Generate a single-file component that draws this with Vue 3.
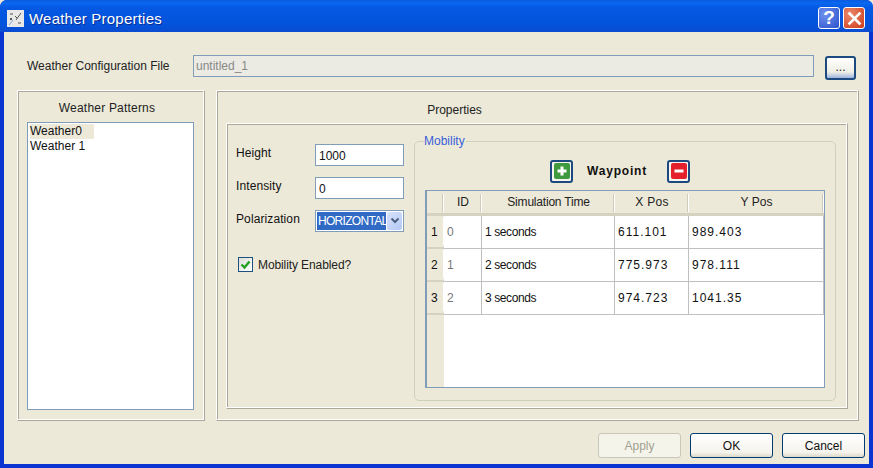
<template>
  <div class="window">
    <div class="titlebar">
      <span class="app-icon">
        <svg width="17" height="17" viewBox="0 0 17 17">
          <rect width="17" height="17" fill="#e8e8e8" />
          <path d="M3 8l2 2M5 8l-2 2M9 10l5-7M3 4h3M11 13h3M8 6l2 2" stroke="#555" stroke-width="1" fill="none" />
          <path d="M2 15l4-5" stroke="#7aa5d8" stroke-width="1" />
        </svg>
      </span>
      <span class="title">Weather Properties</span>
      <button class="cap-btn help">?</button>
      <button class="cap-btn close">
        <svg width="15" height="15" viewBox="0 0 15 15">
          <path d="M2.5 2.5l10 10M12.5 2.5l-10 10" stroke="#fff" stroke-width="2.6" stroke-linecap="square" />
        </svg>
      </button>
    </div>

    <div class="client">
      <div class="config-row">
        <label class="config-label">Weather Configuration File</label>
        <input class="config-input" type="text" value="untitled_1" disabled />
        <button class="browse">...</button>
      </div>

      <div class="panels">
        <div class="frame patterns">
          <div class="frame-title patterns-title">Weather Patterns</div>
          <ul class="pattern-list">
            <li v-for="(p, i) in patterns" :key="p"><span :class="{ current: i === 0 }">{{ p }}</span></li>
          </ul>
        </div>

        <div class="frame properties">
          <div class="frame-title props-title">Properties</div>
          <div class="frame inner">
            <div class="form-col">
              <div class="field"><span>Height</span><input type="text" value="1000" /></div>
              <div class="field"><span>Intensity</span><input type="text" value="0" /></div>
              <div class="field">
                <span>Polarization</span>
                <div class="combo">
                  <span class="combo-text">HORIZONTAL</span>
                  <span class="combo-arrow">
                    <svg width="10" height="8" viewBox="0 0 10 8">
                      <path d="M1.5 1.5L5 5l3.5-3.5" stroke="#4d6185" stroke-width="2" fill="none" />
                    </svg>
                  </span>
                </div>
              </div>
              <div class="check-row">
                <span class="check">
                  <svg width="11" height="11" viewBox="0 0 11 11">
                    <path d="M1.5 5.5L4.5 8.5L9.5 2.5" stroke="#21a121" stroke-width="2.4" fill="none" />
                  </svg>
                </span>
                <span>Mobility Enabled?</span>
              </div>
            </div>

            <fieldset class="mobility">
              <legend>Mobility</legend>
              <div class="way-row">
                <button class="icon-btn">
                  <svg width="16" height="16" viewBox="0 0 16 16">
                    <rect width="16" height="16" rx="2" fill="#3f9a3f" />
                    <path d="M8 3.5v9M3.5 8h9" stroke="#fff" stroke-width="3" />
                  </svg>
                </button>
                <span class="way-label">Waypoint</span>
                <button class="icon-btn">
                  <svg width="16" height="16" viewBox="0 0 16 16">
                    <rect width="16" height="16" rx="2" fill="#e3202c" />
                    <path d="M3.5 8h9" stroke="#fff" stroke-width="3" />
                  </svg>
                </button>
              </div>
              <div class="table">
                <div class="corner"></div>
                <div v-for="h in headers" :key="h" class="th">{{ h }}</div>
                <template v-for="(r, i) in rows" :key="r.id">
                  <div class="row-head">{{ i + 1 }}</div>
                  <div class="td id">{{ r.id }}</div>
                  <div class="td time">{{ r.time }}</div>
                  <div class="td num">{{ r.x }}</div>
                  <div class="td num">{{ r.y }}</div>
                </template>
                <div class="gutter"></div>
                <div class="blank"></div>
              </div>
            </fieldset>
          </div>
        </div>
      </div>

      <div class="actions">
        <button class="push disabled">Apply</button>
        <button class="push">OK</button>
        <button class="push">Cancel</button>
      </div>
    </div>
  </div>
</template>

<script setup>
const patterns = ['Weather0', 'Weather 1']
const headers = ['ID', 'Simulation Time', 'X Pos', 'Y Pos']
const rows = [
  { id: 0, time: '1 seconds', x: '611.101', y: '989.403' },
  { id: 1, time: '2 seconds', x: '775.973', y: '978.111' },
  { id: 2, time: '3 seconds', x: '974.723', y: '1041.35' }
]
</script>

<style>
html, body { margin: 0; background: #ece9d8; }
</style>

<style scoped>
.window {
  width: 873px;
  height: 468px;
  box-sizing: border-box;
  display: flex;
  flex-direction: column;
  font-family: "Liberation Sans", Arial, sans-serif;
  font-size: 12px;
  color: #111;
  overflow: hidden;
  background: #0a35d0;
  border-radius: 7px 7px 0 0;
}
.titlebar {
  height: 32px;
  flex: none;
  box-sizing: border-box;
  display: flex;
  align-items: center;
  padding: 4px 8px 0 7px;
  background: linear-gradient(#0a5ae0 0, #0a68f0 3px, #0458e2 8px, #0353dc 24px, #0a4cd0 100%);
}
.app-icon { width: 17px; height: 17px; margin-right: 5px; }
.title {
  flex: 1;
  color: #fff;
  font-size: 15px;
  letter-spacing: 0.22px;
  text-shadow: 1px 1px 0 #0a2c90;
}
.cap-btn {
  width: 22px;
  height: 22px;
  padding: 0;
  margin-left: 3px;
  border: 1px solid #fff;
  border-radius: 3px;
  display: flex;
  align-items: center;
  justify-content: center;
  color: #fff;
  font: bold 19px "Liberation Sans", sans-serif;
}
.help { background: radial-gradient(circle at 30% 30%, #6f92ee, #2c50cc); }
.close { background: radial-gradient(circle at 30% 30%, #e88a6c, #cf3a18); }
.client {
  flex: 1;
  margin: 0 4px 4px;
  background: #ece9d8;
  display: flex;
  flex-direction: column;
  min-height: 0;
}
.config-row {
  display: flex;
  align-items: flex-start;
  height: 24px;
  margin-top: 22px;
  padding-left: 23px;
}
.config-label { width: 166px; color: #222; line-height: 24px; }
.config-input {
  width: 621px;
  height: 22px;
  margin-top: 1px;
  box-sizing: border-box;
  border: 1px solid #7f9db9;
  background: #ebebe4;
  color: #888;
  padding: 0 2px;
  font: inherit;
}
.browse {
  width: 31px;
  height: 24px;
  margin: 2px 0 0 11px;
  padding: 0 0 2px;
  border: 2px solid #1c4a80;
  border-radius: 3px;
  background: linear-gradient(#fff, #f0efe6 70%, #9fb4e0);
  font: 12px "Liberation Sans", sans-serif;
  color: #222;
}
.panels {
  display: flex;
  gap: 11px;
  margin: 12px 0 0 13px;
  height: 331px;
}
.frame {
  box-sizing: border-box;
  border: 1px solid #aca899;
  border-left-color: #fff;
  border-top-color: #fff;
  box-shadow: inset -1px -1px 0 #fff, inset 1px 1px 0 #aca899;
}
.patterns {
  width: 188px;
  display: flex;
  flex-direction: column;
  padding: 0 10px 10px 9px;
}
.frame-title { height: 31px; line-height: 35px; text-align: center; color: #222; }
.patterns-title { padding-right: 7px; letter-spacing: 0.2px; }
.pattern-list {
  flex: 1;
  margin: 0;
  padding: 1px 2px;
  list-style: none;
  background: #fff;
  border: 1px solid #7f9db9;
  line-height: 15px;
}
.pattern-list .current { display: inline-block; width: 64px; background: #ece9d8; }
.properties {
  width: 643px;
  display: flex;
  flex-direction: column;
  padding: 0 10px 11px 9px;
}
.props-title { height: 32px; line-height: 39px; padding-right: 165px; }
.inner {
  flex: 1;
  display: flex;
  padding: 10px 0 0 9px;
}
.form-col { width: 178px; flex: none; padding-top: 10px; box-sizing: border-box; }
.field {
  display: flex;
  justify-content: space-between;
  width: 168px;
  height: 22px;
  margin-bottom: 11px;
  letter-spacing: 0.1px;
}
.field > span { line-height: 19px; }
.field input, .combo {
  width: 89px;
  height: 22px;
  box-sizing: border-box;
  border: 1px solid #7f9db9;
  background: #fff;
  font: inherit;
  color: #111;
  padding: 2px 3px 0;
}
.combo {
  display: flex;
  align-items: center;
  padding: 1px;
  gap: 1px;
  overflow: hidden;
}
.combo-text {
  flex: 1;
  min-width: 0;
  height: 18px;
  line-height: 18px;
  overflow: hidden;
  white-space: nowrap;
  background: #316ac5;
  color: #fff;
  padding-left: 1px;
  letter-spacing: -0.7px;
}
.combo-arrow {
  width: 15px;
  height: 18px;
  flex: none;
  display: flex;
  align-items: center;
  justify-content: center;
  border-radius: 2px;
  background: linear-gradient(135deg, #d8e2fb, #b4c8f5);
}
.check-row {
  display: flex;
  align-items: center;
  gap: 5px;
  margin: 25px 0 0 2px;
  letter-spacing: -0.1px;
  color: #222;
}
.check {
  width: 13px;
  height: 13px;
  border: 1px solid #1c5180;
  background: linear-gradient(135deg, #dcdcd7, #fff);
  display: flex;
  align-items: center;
  justify-content: center;
}
.mobility {
  width: 422px;
  height: 267px;
  box-sizing: border-box;
  flex: none;
  margin: 0;
  padding: 0 10px 11px;
  border: 1px solid #d0d0bf;
  border-radius: 5px;
  min-width: 0;
}
.mobility legend { padding: 0 1px 0 0; margin-left: -1px; color: #3a5fd8; line-height: 14px; }
.way-row {
  display: flex;
  align-items: center;
  height: 26px;
  margin: 10px 0 6px 125px;
}
.icon-btn {
  width: 23px;
  height: 23px;
  padding: 0;
  border: 2px solid #1c4a80;
  border-radius: 3px;
  background: #f6f5ee;
  display: flex;
  align-items: center;
  justify-content: center;
}
.way-label { width: 94px; box-sizing: border-box; padding-left: 14px; font-weight: bold; letter-spacing: 0.8px; }
.table {
  display: grid;
  grid-template-columns: 17px 38px 133px 74px 135px;
  grid-template-rows: 25px 33px 33px 33px 1fr;
  height: 198px;
  width: 400px;
  box-sizing: border-box;
  border: 1px solid #7f9db9;
  border-left-width: 2px;
  background: #fff;
}
.corner, .th {
  background:
    linear-gradient(#cfcbba, #cfcbba) right 1px top 3px / 1px 18px no-repeat,
    linear-gradient(#fff, #fff) right 0 top 3px / 1px 18px no-repeat,
    #ece9d8;
  border-bottom: 3px solid #d6d2c2;
  box-sizing: border-box;
  text-align: center;
  line-height: 23px;
  color: #222;
}
.th:nth-child(3) { letter-spacing: -0.2px; }
.th:nth-child(4) { letter-spacing: 0.3px; }
.row-head {
  background:
    linear-gradient(#fff, #fff) right 0 top 1px / 1px 28px no-repeat,
    #ece9d8;
  box-sizing: border-box;
  border-bottom: 2px solid #d6d2c2;
  display: flex;
  align-items: center;
  padding-left: 4px;
}
.td {
  box-sizing: border-box;
  border-right: 1px solid #c0c0c0;
  border-bottom: 1px solid #c0c0c0;
  padding-left: 3px;
  display: flex;
  align-items: center;
}
.td.id { color: #777; }
.td.time { letter-spacing: -0.4px; }
.td.num { letter-spacing: 1px; }
.gutter { background: #ece9d8; }
.blank { grid-column: 2 / 6; background: #fff; }
.actions {
  display: flex;
  justify-content: flex-end;
  gap: 9px;
  margin-top: 12px;
  padding-right: 4px;
}
.push {
  width: 83px;
  height: 25px;
  padding: 0;
  border: 1px solid #003c74;
  border-radius: 3px;
  background: linear-gradient(#fff, #f4f3ec 80%, #dcd8c8);
  font: 12px "Liberation Sans", sans-serif;
  color: #111;
}
.push.disabled { border-color: #c9c7ba; color: #a1a192; background: #f5f4ea; }
</style>
